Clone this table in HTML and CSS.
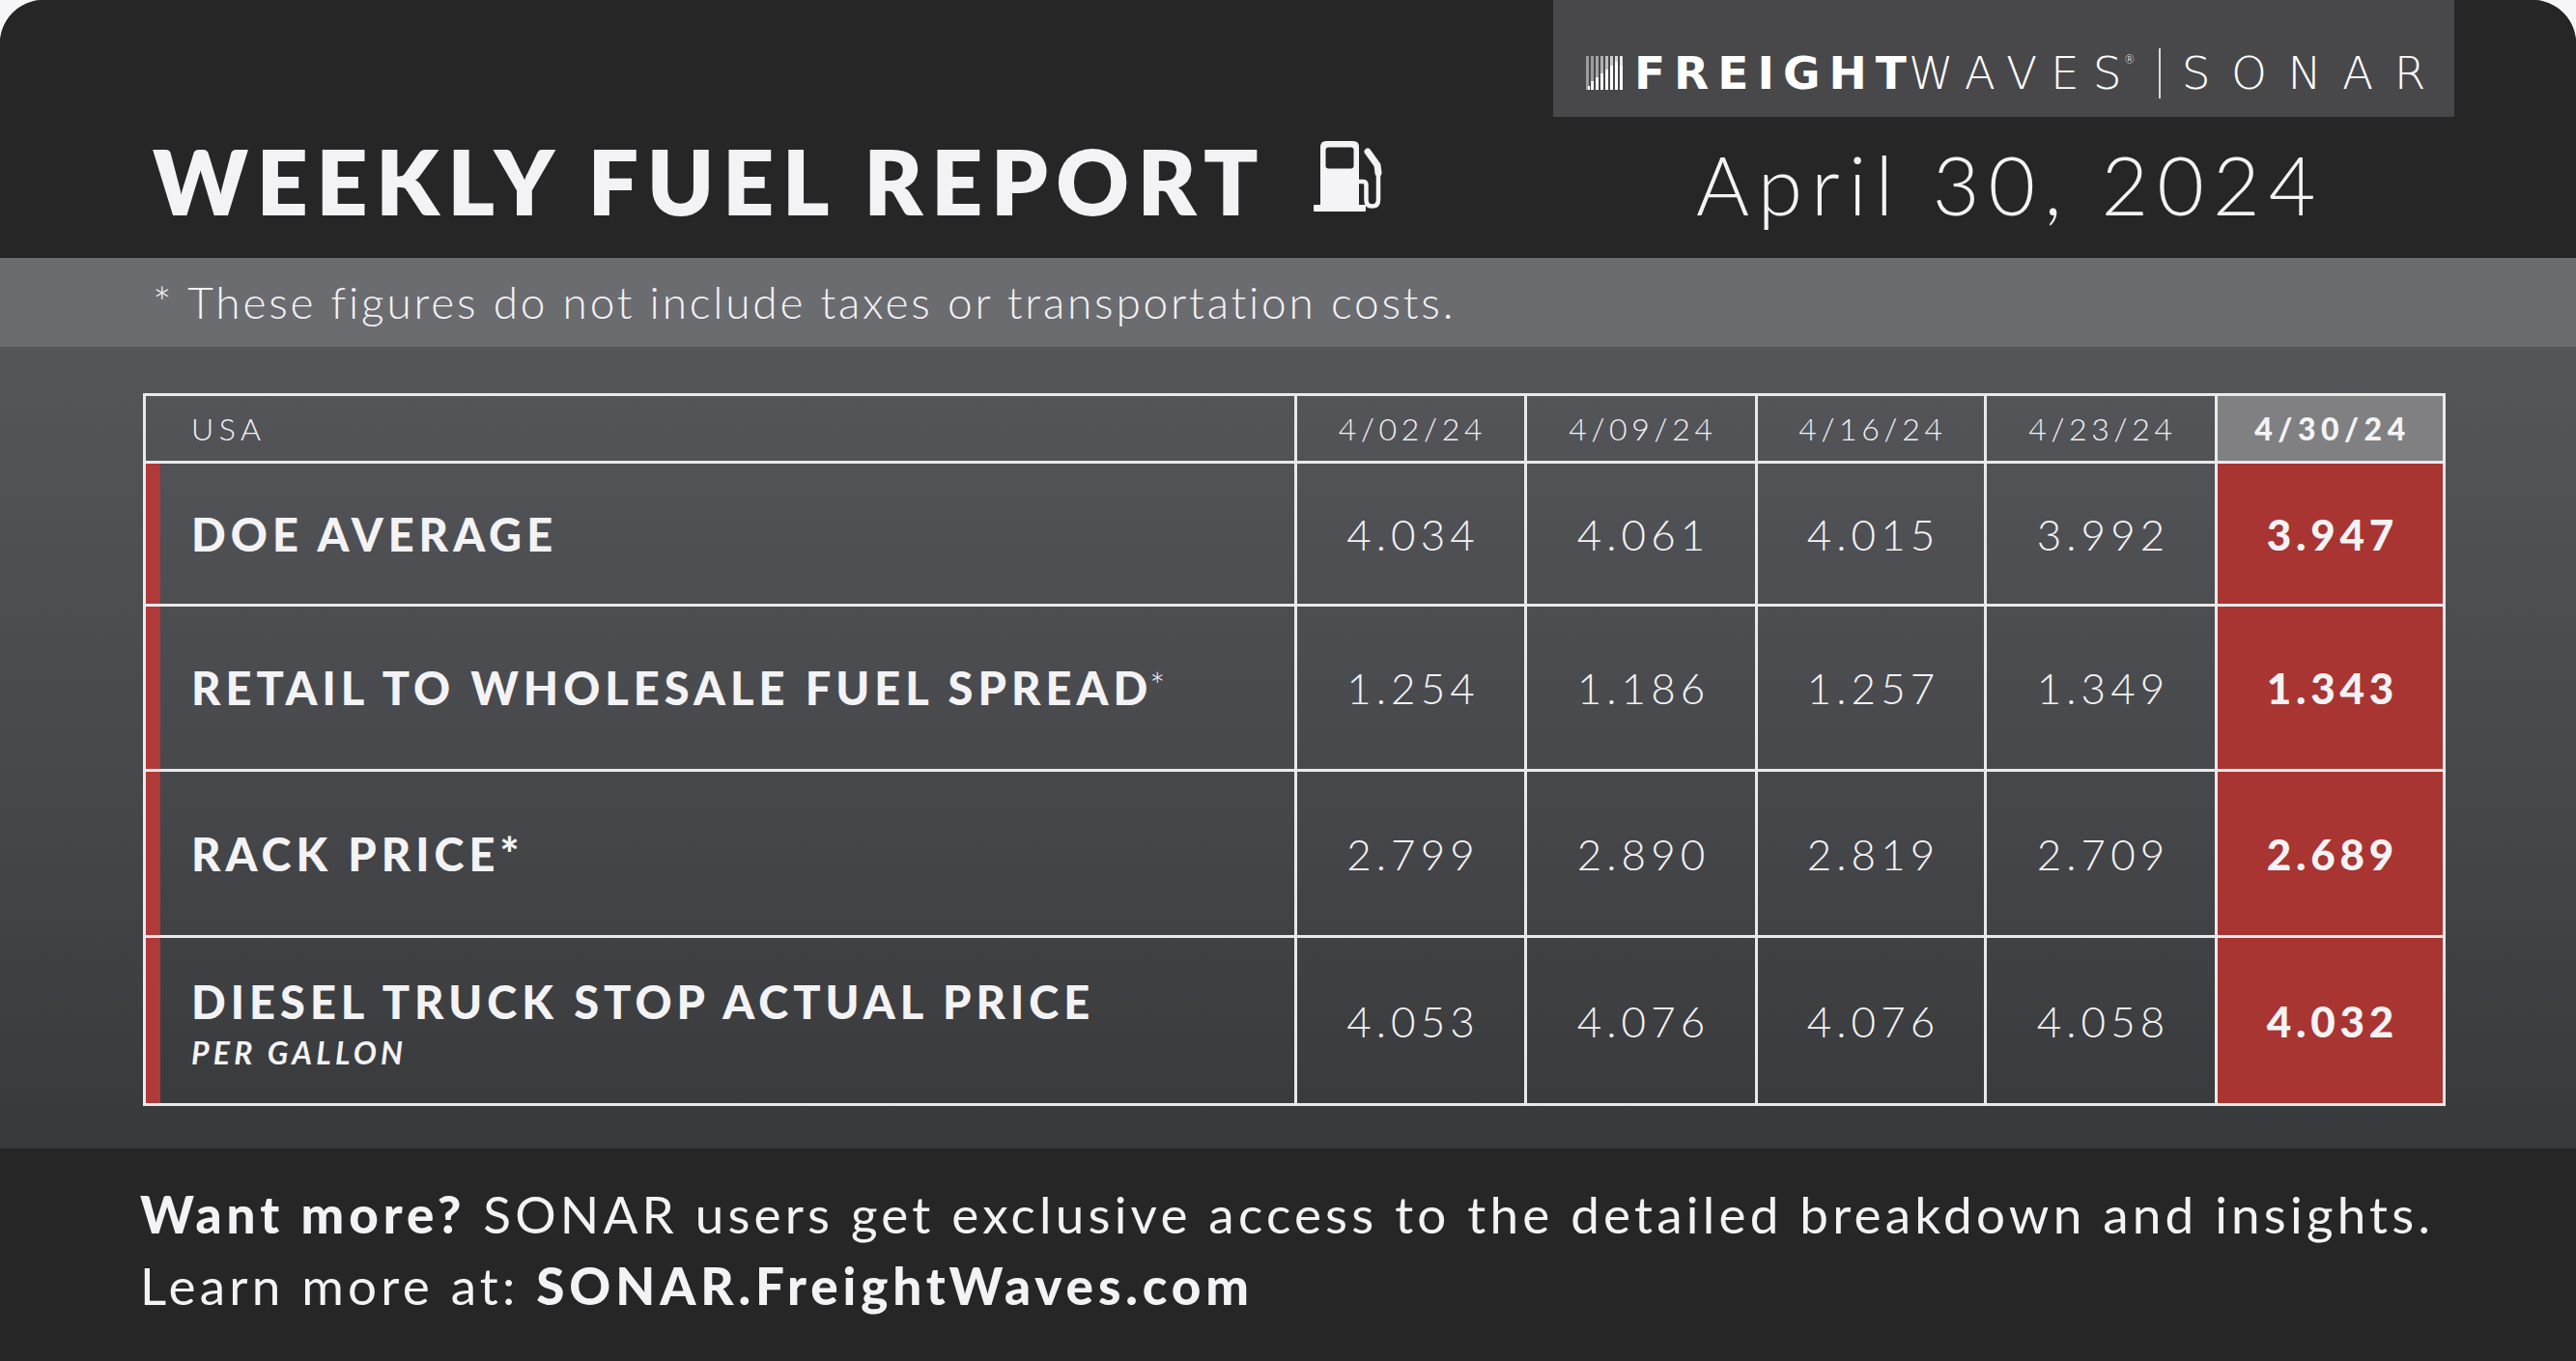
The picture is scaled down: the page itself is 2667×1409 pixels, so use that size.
FILE: index.html
```html
<!DOCTYPE html>
<html lang="en">
<head>
<meta charset="utf-8">
<title>Weekly Fuel Report</title>
<link rel="stylesheet" href="styles.css">
</head>
<body>
<div class="card">
  <header class="top">
    <div class="brand">
      <svg class="bars" viewBox="0 0 38 35" aria-hidden="true">
        <rect x="0" y="0" width="3" height="35" fill="#9c9c9e"/>
        <rect x="5" y="0" width="3" height="35" fill="#9c9c9e"/>
        <rect x="10" y="0" width="3" height="35" fill="#a6a6a8"/>
        <rect x="15" y="0" width="3" height="35" fill="#b0b0b2"/>
        <rect x="20" y="0" width="3" height="35" fill="#bdbdbf"/>
        <rect x="25" y="0" width="3" height="35" fill="#cacacc"/>
        <rect x="30" y="0" width="3" height="35" fill="#d6d6d8"/>
        <rect x="35" y="0" width="3" height="35" fill="#e4e4e6"/>
        <rect x="5" y="26" width="3" height="9" fill="#fff"/>
        <rect x="10" y="22" width="3" height="13" fill="#fff"/>
        <rect x="15" y="18" width="3" height="17" fill="#fff"/>
        <rect x="20" y="14" width="3" height="21" fill="#fff"/>
        <rect x="25" y="10" width="3" height="25" fill="#fff"/>
        <rect x="30" y="6" width="3" height="29" fill="#fff"/>
        <rect x="35" y="10" width="3" height="25" fill="#fff"/>
        <rect x="2" y="31" width="2" height="4" fill="#fff"/>
      </svg>
      <span class="fw-bold">FREIGHT</span><span class="fw-thin">WAVE<span class="s-last">S</span><sup class="reg">®</sup></span>
      <span class="sep"></span>
      <span class="sonar">SONAR</span>
    </div>
    <div class="title-row">
      <div class="title-wrap">
        <h1 class="title">WEEKLY FUEL REPORT</h1>
        <svg class="pump" viewBox="15 10 80 80" aria-hidden="true">
          <path d="M25 82 V19 Q25 13 31 13 H59 Q65 13 65 19 V82 Z" fill="#f4f4f6"/>
          <rect x="18" y="79" width="54" height="7" rx="1" fill="#f4f4f6"/>
          <rect x="30.5" y="19.5" width="29" height="22" rx="3" fill="#262626"/>
          <path d="M64 55 H69 Q72.5 55 72.5 58.5 V74 Q72.5 80.5 78.7 80.5 Q85 80.5 85 74 V44" fill="none" stroke="#f4f4f6" stroke-width="4.5"/>
          <path d="M74 24 L84 38 L85 46" fill="none" stroke="#f4f4f6" stroke-width="7" stroke-linecap="round" stroke-linejoin="round"/>
        </svg>
      </div>
      <div class="date">April 30, 2024</div>
    </div>
  </header>

  <div class="note">* These figures do not include taxes or transportation costs.</div>

  <main class="body">
    <div class="grid">
      <div class="cell head region">USA</div>
      <div class="cell head">4/02/24</div>
      <div class="cell head">4/09/24</div>
      <div class="cell head">4/16/24</div>
      <div class="cell head">4/23/24</div>
      <div class="cell head cur">4/30/24</div>

      <div class="cell label">DOE AVERAGE</div>
      <div class="cell num">4.034</div>
      <div class="cell num">4.061</div>
      <div class="cell num">4.015</div>
      <div class="cell num">3.992</div>
      <div class="cell num cur">3.947</div>

      <div class="cell label">RETAIL TO WHOLESALE FUEL SPREAD<span class="ast">*</span></div>
      <div class="cell num">1.254</div>
      <div class="cell num">1.186</div>
      <div class="cell num">1.257</div>
      <div class="cell num">1.349</div>
      <div class="cell num cur">1.343</div>

      <div class="cell label">RACK PRICE*</div>
      <div class="cell num">2.799</div>
      <div class="cell num">2.890</div>
      <div class="cell num">2.819</div>
      <div class="cell num">2.709</div>
      <div class="cell num cur">2.689</div>

      <div class="cell label stack">
        <span class="main">DIESEL TRUCK STOP ACTUAL PRICE</span>
        <span class="sub">PER GALLON</span>
      </div>
      <div class="cell num">4.053</div>
      <div class="cell num">4.076</div>
      <div class="cell num">4.076</div>
      <div class="cell num">4.058</div>
      <div class="cell num cur">4.032</div>
    </div>
  </main>

  <footer class="foot">
    <p><b>Want more?</b> SONAR users get exclusive access to the detailed breakdown and insights.</p>
    <p>Learn more at: <b>SONAR.FreightWaves.com</b></p>
  </footer>
</div>
</body>
</html>
```

FILE: styles.css
```css
html, body {
  margin: 0;
  padding: 0;
  background: #f6f6f8;
}

body {
  font-family: "Lato", "Liberation Sans", sans-serif;
  color: #f3f3f5;
}

.card {
  width: 2667px;
  height: 1409px;
  border-radius: 45px 45px 0 0;
  overflow: hidden;
  background: #262626;
  display: flex;
  flex-direction: column;
}

/* ---------- header ---------- */
.top {
  height: 267px;
  background: #262626;
  display: flex;
  flex-direction: column;
}

.brand {
  margin-left: 1608px;
  width: 933px;
  height: 121px;
  box-sizing: border-box;
  padding: 30px 0 0 34px;
  background: #48484a;
  display: flex;
  align-items: center;
  color: #ffffff;
}

.bars {
  width: 38px;
  height: 35px;
  margin-right: 12px;
}

.fw-bold {
  font-family: "DejaVu Sans", "Liberation Sans", sans-serif;
  font-weight: 700;
  font-size: 47px;
  line-height: 1;
  letter-spacing: 9px;
}

.fw-thin {
  font-family: "DejaVu Sans", "Lato", sans-serif;
  font-weight: 200;
  font-size: 47px;
  line-height: 1;
  letter-spacing: 14px;
  margin-left: -7px;
}

.fw-thin .s-last {
  letter-spacing: 0;
}

.reg {
  font-size: 12px;
  letter-spacing: 0;
  vertical-align: 26px;
  line-height: 0;
  margin-left: 2px;
}

.sep {
  width: 2px;
  height: 52px;
  background: #d8d8da;
  margin: 0 22px 0 24px;
}

.sonar {
  font-family: "DejaVu Sans", "Lato", sans-serif;
  font-weight: 200;
  font-size: 47px;
  line-height: 1;
  letter-spacing: 21.5px;
}

.title-row {
  flex: 1;
  display: grid;
  grid-template-columns: 1756px 1fr;
  align-items: baseline;
  padding-top: 20px;
}

.title-wrap {
  display: flex;
  align-items: baseline;
  padding-left: 158px;
}

.title {
  margin: 0;
  font-size: 93px;
  line-height: 1;
  font-weight: 800;
  letter-spacing: 8.5px;
  color: #f3f3f5;
}

.pump {
  width: 80px;
  height: 80px;
  margin-left: 46px;
}

.date {
  font-size: 84px;
  line-height: 1;
  font-weight: 300;
  letter-spacing: 9px;
  color: #f3f3f5;
}

/* ---------- note ---------- */
.note {
  height: 92px;
  line-height: 92px;
  background: #6b6c70;
  padding-left: 158px;
  font-size: 46px;
  font-weight: 300;
  letter-spacing: 2.8px;
  color: #f3f3f5;
}

/* ---------- table ---------- */
.body {
  height: 830px;
  box-sizing: border-box;
  padding: 48px 0 0 148px;
  background: linear-gradient(180deg, #55565a 0%, #48494c 50%, #38393b 100%);
}

.grid {
  display: grid;
  grid-template-columns: 1192px 238px 239px 237px 239px 236px;
  grid-template-rows: 70px 148px 171px 172px 174px;
  width: max-content;
  border-top: 3px solid #e9e9eb;
  border-left: 3px solid #e9e9eb;
}

.cell {
  box-sizing: border-box;
  border-right: 3px solid #e9e9eb;
  border-bottom: 3px solid #e9e9eb;
  display: flex;
  align-items: center;
  justify-content: center;
  color: #f3f3f5;
}

.head {
  font-size: 32px;
  font-weight: 300;
  letter-spacing: 4.7px;
  text-indent: 4px;
}

.head.region {
  justify-content: flex-start;
  padding-left: 47px;
  letter-spacing: 5.5px;
  text-indent: 0;
}

.head.cur {
  background: #808082;
  font-weight: 900;
  letter-spacing: 5.5px;
  text-indent: 5px;
}

.label {
  justify-content: flex-start;
  padding-left: 47px;
  font-size: 47px;
  font-weight: 900;
  letter-spacing: 5px;
  background: linear-gradient(90deg, #b0393a 0, #b0393a 15px, transparent 15px);
}

.label .ast {
  font-weight: 300;
  font-size: 38px;
  letter-spacing: 0;
  align-self: flex-start;
  margin-top: 58px;
  margin-left: -3px;
}

.label.stack {
  flex-direction: column;
  align-items: flex-start;
  justify-content: center;
  padding-top: 6px;
}

.label .main {
  line-height: 1;
}

.label .sub {
  font-size: 32px;
  line-height: 1;
  font-weight: 700;
  font-style: italic;
  letter-spacing: 4.2px;
  margin-top: 13px;
}

.num {
  font-size: 44px;
  font-weight: 300;
  letter-spacing: 5px;
  text-indent: 5px;
}

.num.cur {
  background: #a83532;
  font-weight: 900;
  letter-spacing: 4.7px;
  text-indent: 4.7px;
}

/* ---------- footer ---------- */
.foot {
  flex: 1;
  background: #262626;
  padding: 31px 0 0 145px;
  font-size: 53px;
  line-height: 74px;
  letter-spacing: 4.2px;
}

.foot p {
  margin: 0;
}

.foot b {
  font-weight: 900;
  letter-spacing: 4.9px;
}
```
